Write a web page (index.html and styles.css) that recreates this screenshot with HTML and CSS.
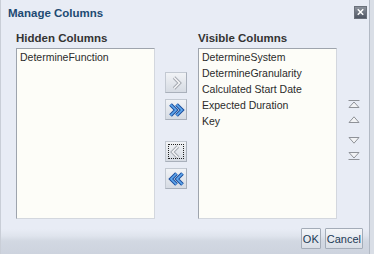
FILE: index.html
```html
<!DOCTYPE html>
<html lang="en">
<head>
    <meta charset="UTF-8">
    <title>Manage Columns</title>
    <link rel="stylesheet" href="styles.css">
</head>
<body>
    <div class="dialog">
        <!-- title -->
        <div class="title-bar">
            <span class="title">Manage Columns</span>
            <a href="#" class="close-btn">
                <svg width="12" height="12" viewBox="0 0 12 12"><path d="M3 3 L9 9 M9 3 L3 9" stroke="#fff" stroke-width="1.6"/></svg>
            </a>
        </div>
        <!-- shuttle -->
        <div class="shuttle">
            <div class="column">
                <div class="col-label">Hidden Columns</div>
                <ul class="list">
                    <li>DetermineFunction</li>
                </ul>
            </div>
            <div class="move-btns">
                <div class="move-btn">
                    <svg width="14" height="16" viewBox="0 0 14 16"><path d="M5 2.5 L10.5 8 L5 13.5" fill="none" stroke="#a3a8b0" stroke-width="3.4"/><path d="M5 2.5 L10.5 8 L5 13.5" fill="none" stroke="#f4f5f7" stroke-width="1.5"/></svg>
                </div>
                <div class="move-btn">
                    <svg width="17" height="16" viewBox="0 0 17 16"><path d="M2.5 2.5 L8 8 L2.5 13.5 M8.5 2.5 L14 8 L8.5 13.5" fill="none" stroke="#1d4f9e" stroke-width="3.8"/><path d="M2.5 2.5 L8 8 L2.5 13.5 M8.5 2.5 L14 8 L8.5 13.5" fill="none" stroke="#5fa8ee" stroke-width="1.7"/></svg>
                </div>
                <div class="move-btn gap focus">
                    <svg width="14" height="16" viewBox="0 0 14 16"><path d="M9 2.5 L3.5 8 L9 13.5" fill="none" stroke="#a3a8b0" stroke-width="3.4"/><path d="M9 2.5 L3.5 8 L9 13.5" fill="none" stroke="#f4f5f7" stroke-width="1.5"/></svg>
                </div>
                <div class="move-btn">
                    <svg width="17" height="16" viewBox="0 0 17 16"><path d="M8.5 2.5 L3 8 L8.5 13.5 M14.5 2.5 L9 8 L14.5 13.5" fill="none" stroke="#1d4f9e" stroke-width="3.8"/><path d="M8.5 2.5 L3 8 L8.5 13.5 M14.5 2.5 L9 8 L14.5 13.5" fill="none" stroke="#5fa8ee" stroke-width="1.7"/></svg>
                </div>
            </div>
            <div class="column">
                <div class="col-label">Visible Columns</div>
                <ul class="list">
                    <li>DetermineSystem</li>
                    <li>DetermineGranularity</li>
                    <li>Calculated Start Date</li>
                    <li>Expected Duration</li>
                    <li>Key</li>
                </ul>
            </div>
            <div class="reorder">
                <svg class="top" width="12" height="8" viewBox="0 0 12 8"><path d="M0.5 0.5 H11.5" stroke="#8f9298"/><path d="M6 2 L11 7.5 H1 Z" fill="#f2f3f5" stroke="#8f9298"/></svg>
                <svg class="up" width="12" height="7" viewBox="0 0 12 7"><path d="M6 0.8 L11 6.5 H1 Z" fill="#f2f3f5" stroke="#8f9298"/></svg>
                <svg class="down" width="12" height="7" viewBox="0 0 12 7"><path d="M6 6.2 L11 0.5 H1 Z" fill="#f2f3f5" stroke="#8f9298"/></svg>
                <svg class="bottom" width="12" height="8" viewBox="0 0 12 8"><path d="M6 6 L11 0.5 H1 Z" fill="#f2f3f5" stroke="#8f9298"/><path d="M0.5 7.5 H11.5" stroke="#8f9298"/></svg>
            </div>
        </div>
        <!-- footer -->
        <div class="footer">
            <button class="btn">OK</button>
            <button class="btn">Cancel</button>
        </div>
    </div>
</body>
</html>
```
FILE: styles.css
```css
*{
    margin: 0;
    padding: 0;
    box-sizing: border-box;
}
body{
    width: 374px;
    height: 254px;
    background: #d9dee6;
    font-family: "Liberation Sans", Arial, sans-serif;
    overflow: hidden;
}
.dialog{
    width: 370px;
    height: 254px;
    border-left: 1px solid #c9ced7;
    border-right: 1px solid #b2b9c4;
    background: linear-gradient(to bottom, #e8ecf5 0, #e8ecf5 229px, #dfe4ed 236px, #d2d8e2 241px, #cdd3de 254px);
    display: flex;
    flex-direction: column;
}
.title-bar{
    height: 26px;
    display: flex;
    align-items: center;
    justify-content: space-between;
    padding: 0 2px 0 7px;
}
.title{
    font-size: 11.5px;
    font-weight: bold;
    color: #1d4a72;
}
.close-btn{
    display: flex;
    align-items: center;
    justify-content: center;
    width: 13px;
    height: 13px;
    margin-top: -2px;
    background: linear-gradient(#8c929c, #4f5663);
    border: 1px solid #6b717b;
}
.shuttle{
    display: flex;
    padding: 4px 0 0 15px;
}
.column{
    display: flex;
    flex-direction: column;
}
.col-label{
    height: 16px;
    line-height: 16px;
    margin-bottom: 2px;
    font-size: 11.5px;
    font-weight: bold;
    color: #333;
}
.list{
    list-style: none;
    width: 139px;
    height: 171px;
    padding: 0 3px;
    background: #fdfdf8;
    border: 1px solid #9ea4ad;
    border-right-color: #d3d7de;
    border-bottom-color: #d3d7de;
}
.list li{
    height: 16px;
    line-height: 16px;
    font-size: 10.5px;
    color: #2b2b2b;
    white-space: nowrap;
}
.move-btns{
    display: flex;
    flex-direction: column;
    gap: 6px;
    padding: 42px 11px 0 10px;
}
.move-btn{
    width: 22px;
    height: 21px;
    display: flex;
    align-items: center;
    justify-content: center;
    background: linear-gradient(#f1f3f6, #d6dbe3);
    border: 1px solid #c3c9d2;
    border-right-color: #a9b0bb;
    border-bottom-color: #a9b0bb;
}
.move-btn.gap{
    margin-top: 15px;
}
.move-btn.focus{
    outline: 1px dotted #222;
    outline-offset: -4px;
}
.reorder{
    display: flex;
    flex-direction: column;
    align-items: center;
    padding: 70px 0 0 11px;
}
.reorder .up{
    margin-top: 8px;
}
.reorder .down{
    margin-top: 14px;
}
.reorder .bottom{
    margin-top: 8px;
}
.footer{
    display: flex;
    justify-content: flex-end;
    gap: 4px;
    padding: 9px 6px 0 0;
}
.btn{
    height: 21px;
    padding: 0 1px;
    font-family: "Liberation Sans", Arial, sans-serif;
    font-size: 11px;
    color: #1c3a55;
    background: linear-gradient(#f4f6f9, #d9dee6);
    border: 1px solid #a4acb8;
    border-radius: 1px;
}
```
